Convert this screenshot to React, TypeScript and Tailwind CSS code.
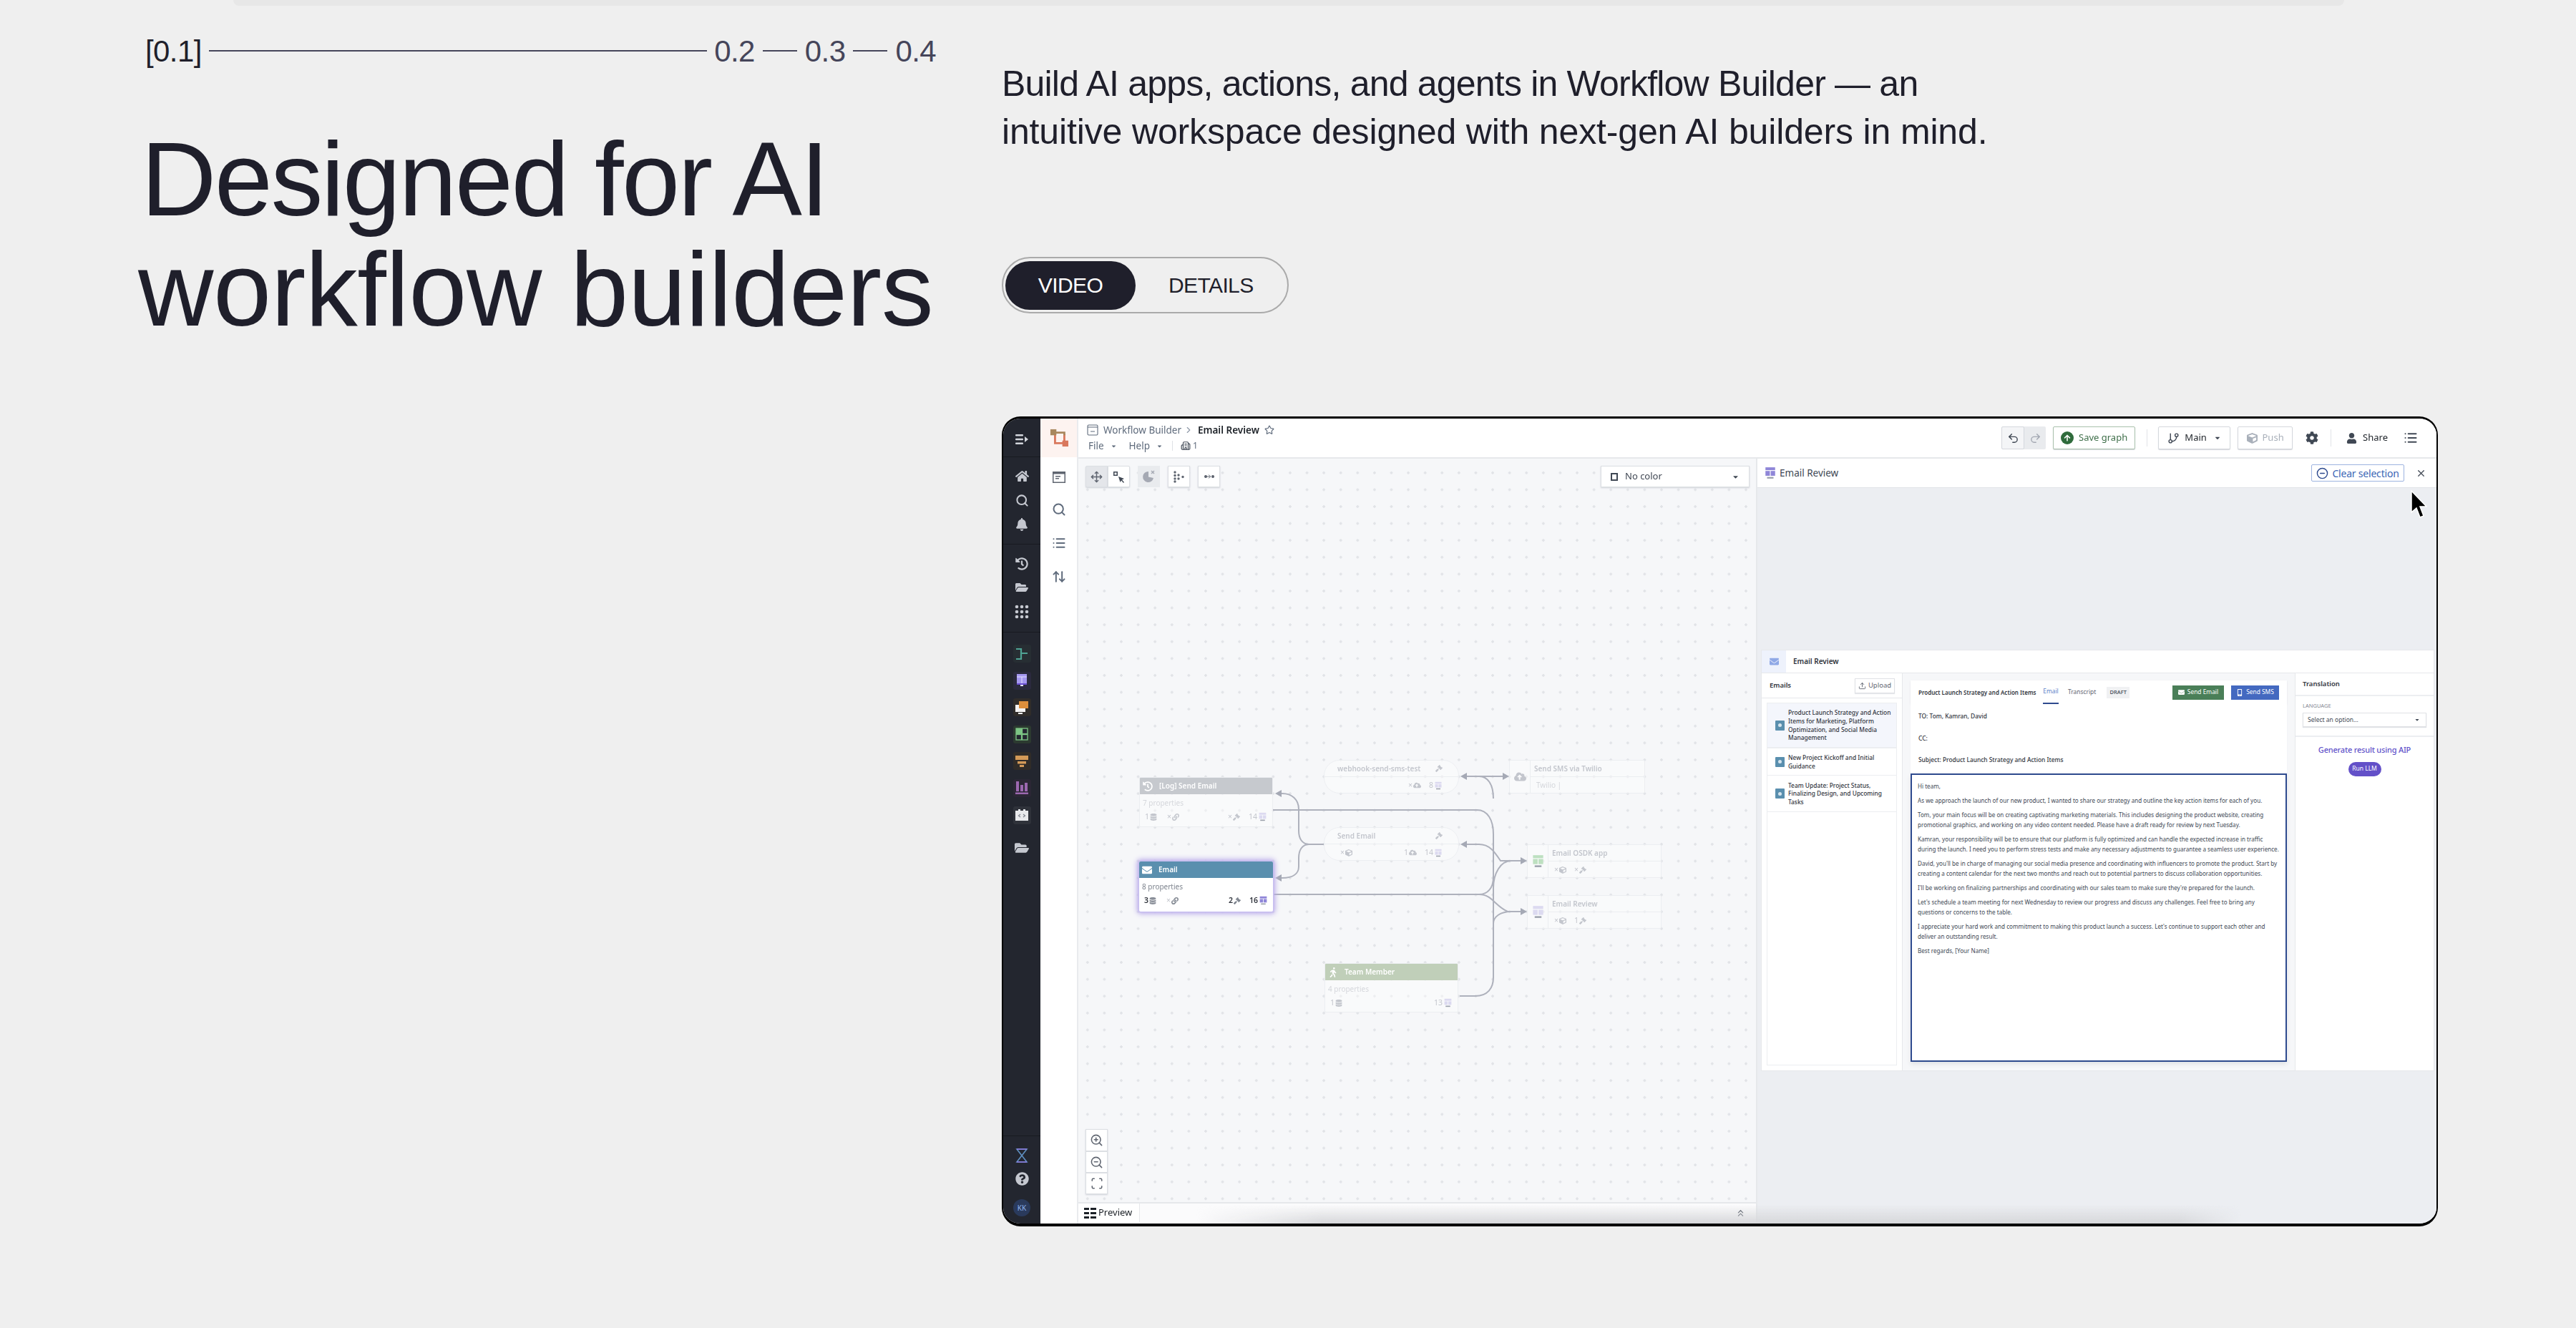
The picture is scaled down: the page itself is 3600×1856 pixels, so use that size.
import {
  Search, List, ArrowUpDown, ChevronRight, ChevronsUp, Star, Undo2, Redo2, GitBranch, X, Move, ZoomIn, ZoomOut, Scan, Upload, CircleMinus, Building2,
} from "lucide-react";
import {
  FaHome, FaBell, FaFolderOpen, FaHistory, FaCog, FaUser, FaEnvelope, FaCube, FaDatabase, FaLink, FaGavel, FaWalking, FaCloudUploadAlt, FaArrowUp, FaMobileAlt, FaQuestionCircle, FaCaretDown,
} from "react-icons/fa";

const plex = "font-['Noto_Sans',sans-serif]";

function Table({ size = 14, color = "#8f86d8" }: { size?: number; color?: string }) {
  return (
    <svg width={size} height={size} viewBox="0 0 16 16" fill={color}>
      <rect x="2" y="1" width="12" height="3.5" />
      <rect x="2" y="5.5" width="5.5" height="6" />
      <rect x="8.5" y="5.5" width="5.5" height="6" />
      <rect x="4" y="13" width="8" height="2" fill="#9aa0ab" />
    </svg>
  );
}

function Grid3() {
  return (
    <svg width="20" height="20" viewBox="0 0 20 20" fill="#c5c8d0">
      {[3, 10, 17].map((y) => [3, 10, 17].map((x) => <circle key={`${x}-${y}`} cx={x} cy={y} r="2.3" />))}
    </svg>
  );
}

function Logo() {
  return (
    <svg width="26" height="26" viewBox="0 0 28 28" fill="none">
      <path d="M8 8V22H22V8" stroke="#d9775c" strokeWidth="3" />
      <path d="M8 6H22V10" stroke="#a8875d" strokeWidth="3" />
      <rect x="1" y="1" width="9" height="9" fill="#a8875d" />
      <rect x="19" y="18" width="9" height="9" fill="#d9775c" />
    </svg>
  );
}

function ColorTile({ bg, children }: { bg: string; children: React.ReactNode }) {
  return (
    <div className="flex h-[25px] w-[25px] items-center justify-center rounded-[3px]" style={{ backgroundColor: bg }}>
      {children}
    </div>
  );
}

function Sidebar() {
  return (
    <div className="flex w-[52px] shrink-0 flex-col bg-[#23262f] text-[#c5c8d0]">
      <div className="flex h-[54px] shrink-0 items-center justify-center border-b border-[#181a20] pt-1">
        <svg width="18" height="16" viewBox="0 0 18 16" fill="#d3d6dc">
          <rect x="0" y="1" width="11" height="2.4" rx="1" />
          <rect x="0" y="6.8" width="11" height="2.4" rx="1" />
          <rect x="0" y="12.6" width="11" height="2.4" rx="1" />
          <path d="M13 4 18 8 13 12Z" />
        </svg>
      </div>
      <div className="flex h-[122px] shrink-0 flex-col items-center gap-[15px] border-b border-[#181a20] pt-[17px]">
        <FaHome size={19} />
        <Search size={19} strokeWidth={2.6} />
        <FaBell size={18} />
      </div>
      <div className="flex h-[123px] shrink-0 flex-col items-center gap-[15px] border-b border-[#181a20] pt-[18px]">
        <FaHistory size={18} />
        <FaFolderOpen size={18} />
        <Grid3 />
      </div>
      <div className="flex flex-col items-center gap-[12.6px] pt-[17px]">
        <ColorTile bg="#272e33">
          <svg width="20" height="20" viewBox="0 0 20 20" fill="none" stroke="#4fa394" strokeWidth="2.2">
            <path d="M2 3H9V9H18M9 9V17H2" />
          </svg>
        </ColorTile>
        <ColorTile bg="#2b2a3e">
          <svg width="20" height="20" viewBox="0 0 20 20">
            <rect x="3" y="1" width="14" height="13" fill="#a598f0" />
            <path d="M3 5H17M10 5V14" stroke="#e4e0ff" strokeWidth="1" />
            <rect x="3" y="14" width="14" height="2" fill="#6a4fd0" />
            <rect x="8" y="16" width="4" height="2" fill="#e4e0ff" />
          </svg>
        </ColorTile>
        <ColorTile bg="#302d2a">
          <svg width="20" height="20" viewBox="0 0 20 20">
            <rect x="1" y="6" width="14" height="10" fill="#f4f4f4" />
            <rect x="6" y="1" width="13" height="10" fill="#dc8f3c" />
            <rect x="5" y="17" width="6" height="2" fill="#f4f4f4" />
          </svg>
        </ColorTile>
        <ColorTile bg="#2c3a30">
          <svg width="20" height="20" viewBox="0 0 20 20" fill="#23262f" stroke="#7cc484" strokeWidth="1.3">
            <rect x="2" y="2" width="7.5" height="7.5" fill="#7cc484" />
            <rect x="10.5" y="2" width="7.5" height="7.5" />
            <rect x="2" y="10.5" width="7.5" height="7.5" />
            <rect x="10.5" y="10.5" width="7.5" height="7.5" />
          </svg>
        </ColorTile>
        <ColorTile bg="#302c28">
          <svg width="20" height="20" viewBox="0 0 20 20" fill="#d39a58">
            <rect x="1" y="2" width="18" height="6" />
            <rect x="4" y="10" width="12" height="3.5" />
            <rect x="7" y="15" width="6" height="3" />
          </svg>
        </ColorTile>
        <ColorTile bg="#2b2735">
          <svg width="20" height="20" viewBox="0 0 20 20" fill="#9c68b0">
            <rect x="2" y="1" width="4" height="14" />
            <rect x="8" y="6" width="4" height="9" />
            <rect x="14" y="3" width="4" height="12" />
            <rect x="1" y="16.5" width="18" height="2.5" />
          </svg>
        </ColorTile>
        <ColorTile bg="#2f323a">
          <svg width="20" height="20" viewBox="0 0 20 20">
            <path d="M1 4H5V2H8V4H12V2H15V4H19V18H1Z" fill="#e8e9ec" />
            <path d="M8 9 5.5 11 8 13M12 9 14.5 11 12 13" stroke="#7d818b" strokeWidth="1.2" fill="none" />
          </svg>
        </ColorTile>
      </div>
      <div className="flex justify-center pt-[23px]">
        <FaFolderOpen size={20} />
      </div>
      <div className="mt-auto flex h-[123px] shrink-0 flex-col items-center gap-[13px] border-t border-[#181a20] pt-[17px]">
        <svg width="18" height="20" viewBox="0 0 18 20" fill="none" strokeWidth="1.6">
          <path d="M2 1H16L2 19H16Z" stroke="#5f8fc0" />
          <path d="M2 1H16M2 19H16" stroke="#8f7be0" />
        </svg>
        <FaQuestionCircle size={19} />
        <div className={`mt-[6px] flex h-[24px] w-[24px] items-center justify-center rounded-full bg-[#2a3a5c] text-[10px] text-[#8fb4ee] ${plex}`}>KK</div>
      </div>
    </div>
  );
}

function ToolRail() {
  return (
    <div className="flex w-[53px] shrink-0 flex-col border-r-2 border-[#e9ebee] bg-white text-[#5f6b7c]">
      <div className="flex h-[54px] items-center justify-center bg-[#fdf3f0]">
        <Logo />
      </div>
      <div className="flex flex-col items-center gap-[27px] pt-[20px]">
        <svg width="18" height="16" viewBox="0 0 18 16">
          <rect width="18" height="16" fill="#5f6570" />
          <rect x="1.5" y="3.5" width="15" height="11" fill="#fff" />
          <rect x="4" y="6" width="7" height="1.5" fill="#5f6570" />
          <rect x="4" y="9" width="5" height="1.5" fill="#5f6570" />
        </svg>
        <Search size={20} strokeWidth={2.4} />
        <List size={20} strokeWidth={2.4} />
        <ArrowUpDown size={20} strokeWidth={2.4} />
      </div>
    </div>
  );
}

function HeaderButton({ className = "", children }: { className?: string; children: React.ReactNode }) {
  return (
    <div className={`flex h-[32px] items-center justify-center gap-[7px] rounded-[2px] border bg-white shadow-[0_1px_1px_#d5d8dd] ${className}`}>
      {children}
    </div>
  );
}

function TopBar() {
  return (
    <div className={`flex h-[56px] shrink-0 items-center border-b-2 border-[#e6e8eb] bg-white pl-[12px] pr-[26px] ${plex}`}>
      <div className="flex flex-col gap-[4px]">
        <div className="flex h-[18px] items-center text-[13.5px] text-[#5f6b7c]">
          <svg width="16" height="16" viewBox="0 0 16 16" fill="none" stroke="#5f6b7c" strokeWidth="1.1" className="mr-[7px]">
            <rect x="1" y="1" width="14" height="14" rx="1.5" />
            <path d="M1 4H15M5 10H11" />
          </svg>
          <span>Workflow Builder</span>
          <ChevronRight size={14} className="mx-[3px] text-[#8f99a8]" />
          <span className="ml-[3px] font-semibold text-[#1c2127]">Email Review</span>
          <Star size={14} className="ml-[7px]" />
        </div>
        <div className="flex h-[18px] items-center text-[13.5px] text-[#5f6b7c]">
          <span className="ml-[2px]">File</span>
          <FaCaretDown size={9} className="ml-[9px]" />
          <span className="ml-[17px]">Help</span>
          <FaCaretDown size={9} className="ml-[9px]" />
          <span className="ml-[13px] h-[14px] w-px bg-[#dfe1e5]" />
          <Building2 size={14} className="ml-[11px] text-[#404854]" />
          <span className="ml-[3px] text-[12px]">1</span>
        </div>
      </div>
      <div className="ml-auto flex items-center text-[13px] text-[#404854]">
        <div className="flex h-[32px] w-[62px] rounded-[2px] bg-[#e9ebee]">
          <div className="flex w-[32px] items-center justify-center rounded-[2px] border border-[#d5d8dd] bg-[#f4f5f7]">
            <Undo2 size={17} />
          </div>
          <div className="flex flex-1 items-center justify-center text-[#a4a9b3]">
            <Redo2 size={17} />
          </div>
        </div>
        <HeaderButton className="ml-[10px] w-[115px] border-[#a9c0ac]">
          <span className="flex h-[18px] w-[18px] items-center justify-center rounded-full bg-[#2f6b3c]">
            <FaArrowUp size={10} color="#fff" />
          </span>
          <span className="text-[#3f6f4a]">Save graph</span>
        </HeaderButton>
        <span className="ml-[16px] h-[24px] w-px bg-[#e1e3e7]" />
        <HeaderButton className="ml-[15px] w-[101px] border-[#d5d8dd]">
          <GitBranch size={17} />
          <span className="text-[#1c2127]">Main</span>
          <FaCaretDown size={10} className="ml-[3px]" />
        </HeaderButton>
        <HeaderButton className="ml-[10px] w-[77px] border-[#d5d8dd] text-[#a9b0ba]">
          <FaCube size={15} />
          <span>Push</span>
        </HeaderButton>
        <FaCog size={18} className="ml-[18px] text-[#404854]" />
        <span className="ml-[17px] h-[24px] w-px bg-[#e1e3e7]" />
        <FaUser size={15} className="ml-[21px]" />
        <span className="ml-[8px] text-[#1c2127]">Share</span>
        <List size={20} className="ml-[22px]" strokeWidth={2.4} />
      </div>
    </div>
  );
}

function IconBtn({ className = "bg-white", children }: { className?: string; children: React.ReactNode }) {
  return (
    <div className={`flex h-[30px] w-[31px] items-center justify-center border border-[#dcdfe3] text-[#5f6570] shadow-[0_1px_2px_#cfd2d8] ${className}`}>
      {children}
    </div>
  );
}

function Arrow({ x, y, left = false }: { x: number; y: number; left?: boolean }) {
  const d = left ? `M${x} ${y}L${x + 9} ${y - 5}V${y + 5}Z` : `M${x} ${y}L${x - 9} ${y - 5}V${y + 5}Z`;
  return <path d={d} fill="#a5a9b5" stroke="none" />;
}

function Edges() {
  return (
    <svg className="absolute inset-0" width="948" height="1040" fill="none" stroke="#aeb1bc" strokeWidth="2">
      <path d="M343 539H323C312 539 308 530 308 520V490C308 476 298 468 285 468H277" />
      <path d="M323 539C312 539 308 548 308 558V570C308 580 300 586 285 586H277" />
      <path d="M272 491H557C572 491 580 505 580 525V725C580 740 572 751 555 751H533" />
      <path d="M538 444H598" />
      <path d="M560 444C572 444 580 455 580 475" />
      <path d="M272 609H560C572 609 580 600 580 585" />
      <path d="M540 539H560C575 539 582 550 590 562H623" />
      <path d="M580 600C580 580 590 562 605 562" />
      <path d="M560 609C578 609 582 625 600 633H623" />
      <path d="M580 650C580 640 590 633 605 633" />
      <Arrow x={275} y={468} left />
      <Arrow x={275} y={586} left />
      <Arrow x={534} y={444} left />
      <Arrow x={534} y={539} left />
      <Arrow x={602} y={444} />
      <Arrow x={627} y={562} />
      <Arrow x={627} y={633} />
    </svg>
  );
}

function Count({ n, children, dark = false }: { n?: string; children: React.ReactNode; dark?: boolean }) {
  return (
    <span className={`flex items-center gap-[1px] text-[10.5px] ${dark ? "font-semibold text-[#30343c]" : "text-[#c3c6cd]"}`}>
      {n}
      {children}
    </span>
  );
}

function ObjectNode({ pos, head, icon, title, props, faint = true, left, right }: {
  pos: string; head: string; icon: React.ReactNode; title: string; props: string; faint?: boolean; left: React.ReactNode; right: React.ReactNode;
}) {
  return (
    <div className={`absolute flex w-[187px] flex-col overflow-hidden rounded-[2px] ${pos} ${faint ? "border border-[#eceef1] bg-white/40" : "bg-white shadow-[0_0_0_1.5px_#c8bff0,0_0_7px_3px_#b8a9ea]"}`}>
      <div className="flex h-[23px] shrink-0 items-center gap-[9px] px-[4px] text-[10px] font-semibold text-white" style={{ backgroundColor: head }}>
        {icon}
        {title}
      </div>
      <div className={`px-[4px] pt-[5px] text-[10px] leading-[14px] ${faint ? "text-[#d5d7dc]" : "text-[#7f858f]"}`}>{props}</div>
      <div className="flex items-center justify-between px-[7px] pt-[5px]">
        {left}
        {right}
      </div>
    </div>
  );
}

function PillNode({ pos, title, left, right }: { pos: string; title: string; left: React.ReactNode; right: React.ReactNode }) {
  return (
    <div className={`absolute h-[47px] w-[189px] rounded-[22px] border border-[#eceef1] bg-white/40 ${pos}`}>
      <div className="flex h-[23px] items-center justify-between border-b border-[#eceef1] pl-[18px] pr-[22px] text-[10px] font-semibold text-[#c3c6cd]">
        {title}
        <FaGavel size={10} />
      </div>
      <div className="flex h-[23px] items-center justify-between pl-[22px] pr-[22px]">
        {left}
        {right}
      </div>
    </div>
  );
}

function AppNode({ pos, w, title, icon, sub }: { pos: string; w: string; title: string; icon: React.ReactNode; sub: React.ReactNode }) {
  return (
    <div className={`absolute flex h-[47px] rounded-[2px] border border-[#eceef1] bg-white/40 ${pos} ${w}`}>
      <div className="flex w-[29px] shrink-0 items-center justify-center border-r border-[#eceef1]">{icon}</div>
      <div className="flex-1">
        <div className="flex h-[23px] items-center border-b border-[#eceef1] pl-[5px] text-[10px] font-semibold text-[#c3c6cd]">{title}</div>
        <div className="flex h-[23px] items-center gap-[8px] pl-[8px] text-[10px] text-[#d5d7dc]">{sub}</div>
      </div>
    </div>
  );
}

function Canvas() {
  return (
    <div className={`relative flex-1 overflow-hidden bg-[#f6f7f9] bg-[radial-gradient(circle,#e1e3e7_1.5px,transparent_2px)] bg-[size:23.6px_23.6px] bg-[position:1px_8px] ${plex}`}>
      <Edges />

      {/* toolbar */}
      <div className="absolute left-[10px] top-[10px] flex items-start gap-[11px]">
        <div className="flex">
          <IconBtn className="rounded-l-[2px] bg-[#e4e6ea]"><Move size={17} /></IconBtn>
          <IconBtn className="rounded-r-[2px] bg-white">
            <svg width="17" height="17" viewBox="0 0 17 17" fill="#404854"><path d="M1 1H7V7H1ZM2.5 2.5V5.5H5.5V2.5ZM8 8 16 11 13 12.5 16 16 15 17 12 13.5 10.5 16Z" /></svg>
          </IconBtn>
        </div>
        <div className="flex h-[30px] w-[31px] items-center justify-center bg-[#e9ebee]">
          <svg width="20" height="18" viewBox="0 0 20 18" fill="#a5a9b3"><path d="M9 2A7.5 7.5 0 1 0 16 11L9 9.5Z" /><path d="M13 1l4 4m0-4-4 4" stroke="#a5a9b3" strokeWidth="1.4" /></svg>
        </div>
        <IconBtn>
          <svg width="17" height="17" viewBox="0 0 17 17" fill="#5f6570"><circle cx="3" cy="2" r="1.7" /><circle cx="3" cy="6.5" r="1.7" /><circle cx="3" cy="11" r="1.7" /><circle cx="3" cy="15" r="1.7" /><circle cx="8" cy="6" r="1.7" /><circle cx="8" cy="11" r="1.7" /><circle cx="14" cy="8.5" r="1.7" /></svg>
        </IconBtn>
        <IconBtn>
          <svg width="16" height="10" viewBox="0 0 18 12" fill="#5f6570" stroke="#5f6570"><circle cx="3" cy="6" r="2" /><circle cx="15" cy="6" r="2" /><path d="M5 6H11M8 3l3 3-3 3" fill="none" strokeWidth="1.2" /></svg>
        </IconBtn>
      </div>

      <div className="absolute right-[9px] top-[10px] flex h-[30px] w-[208px] items-center border border-[#dcdfe3] bg-white pl-[13px] pr-[13px] text-[13px] text-[#404854] shadow-[0_1px_2px_#cfd2d8]">
        <span className="mr-[10px] h-[11px] w-[10px] border-2 border-[#404854]" />
        No color
        <FaCaretDown size={11} className="ml-auto" />
      </div>

      {/* nodes */}
      <ObjectNode
        pos="left-[85px] top-[445px] h-[70px]"
        head="#c6c9ce"
        icon={<FaHistory size={14} />}
        title="[Log] Send Email"
        props="7 properties"
        left={<span className="flex gap-[14px]"><Count n="1"><FaDatabase size={10} /></Count><Count n="× "><FaLink size={10} /></Count></span>}
        right={<span className="flex gap-[12px]"><Count n="× "><FaGavel size={10} /></Count><Count n="14"><Table size={13} color="#dcdaf0" /></Count></span>}
      />
      <ObjectNode
        pos="left-[85px] top-[563px] h-[70px]"
        head="#5a8fae"
        faint={false}
        icon={<FaEnvelope size={14} />}
        title="Email"
        props="8 properties"
        left={<span className="flex gap-[14px]"><Count n="3" dark><FaDatabase size={10} color="#8a8f99" /></Count><Count n="× "><FaLink size={10} color="#7f858f" /></Count></span>}
        right={<span className="flex gap-[12px]"><Count n="2" dark><FaGavel size={10} color="#7f858f" /></Count><Count n="16" dark><Table size={13} /></Count></span>}
      />
      <PillNode
        pos="left-[343px] top-[421px]"
        title="webhook-send-sms-test"
        left={<span />}
        right={<Count n="× "><FaCloudUploadAlt size={11} /><span className="ml-[10px]">8</span><Table size={12} color="#dcdaf0" /></Count>}
      />
      <PillNode
        pos="left-[343px] top-[515px]"
        title="Send Email"
        left={<Count n="× "><FaCube size={10} /></Count>}
        right={<Count n="1"><FaCloudUploadAlt size={11} /><span className="ml-[10px]">14</span><Table size={12} color="#dcdaf0" /></Count>}
      />
      <AppNode pos="left-[602px] top-[421px]" w="w-[190px]" title="Send SMS via Twilio" icon={<FaCloudUploadAlt size={17} color="#c3c6cd" />} sub="Twilio |" />
      <AppNode pos="left-[627px] top-[539px]" w="w-[188px]" title="Email OSDK app" icon={<Table size={19} color="#bde0c0" />} sub={<Count n="× "><FaCube size={10} /><span className="ml-[10px]">× </span><FaGavel size={10} /></Count>} />
      <AppNode pos="left-[627px] top-[610px]" w="w-[188px]" title="Email Review" icon={<Table size={19} color="#dcdaf0" />} sub={<Count n="× "><FaCube size={10} /><span className="ml-[10px]">1</span><FaGavel size={10} /></Count>} />
      <ObjectNode
        pos="left-[344px] top-[705px] h-[69px]"
        head="#c0cfb9"
        icon={<FaWalking size={14} />}
        title="Team Member"
        props="4 properties"
        left={<Count n="1"><FaDatabase size={10} /></Count>}
        right={<Count n="13"><Table size={13} color="#dcdaf0" /></Count>}
      />

      {/* zoom */}
      <div className="absolute bottom-[11px] left-[10px] flex flex-col">
        <IconBtn className="h-[31px] bg-white"><ZoomIn size={19} /></IconBtn>
        <IconBtn className="h-[30px] bg-white"><ZoomOut size={19} /></IconBtn>
        <IconBtn className="h-[30px] bg-white"><Scan size={18} /></IconBtn>
      </div>
    </div>
  );
}

function PreviewBar() {
  return (
    <div className={`flex h-[30px] shrink-0 items-center border-t-2 border-[#e6e8eb] bg-[#fbfbfc] pb-[2px] pr-[14px] ${plex}`}>
      <div className="flex h-full w-[86px] items-center gap-[3px] border-r border-[#e6e8eb] bg-white pl-[8px] text-[13px] text-[#1c2127]">
        <svg width="17" height="15" viewBox="0 0 17 15" fill="#1c2127">
          <path d="M0 0H7V3H0ZM9 0H17V3H9ZM0 6H7V9H0ZM9 6H17V9H9ZM0 12H7V15H0ZM9 12H17V15H9Z" />
        </svg>
        Preview
      </div>
      <ChevronsUp size={15} className="ml-auto text-[#404854]" />
    </div>
  );
}

const mailItems = [
  { h: "h-[63px] bg-[#f4f6fc] border-b-2 border-[#b9c7ea]", lines: ["Product Launch Strategy and Action", "Items for Marketing, Platform", "Optimization, and Social Media", "Management"] },
  { h: "h-[38px]", lines: ["New Project Kickoff and Initial", "Guidance"] },
  { h: "h-[51px]", lines: ["Team Update: Project Status,", "Finalizing Design, and Upcoming", "Tasks"] },
];

const bodyText = [
  ["Hi team,"],
  ["As we approach the launch of our new product, I wanted to share our strategy and outline the key action items for each of you."],
  ["Tom, your main focus will be on creating captivating marketing materials. This includes designing the product website, creating", "promotional graphics, and working on any video content needed. Please have a draft ready for review by next Tuesday."],
  ["Kamran, your responsibility will be to ensure that our platform is fully optimized and can handle the expected increase in traffic", "during the launch. I need you to perform stress tests and make any necessary adjustments to guarantee a seamless user experience."],
  ["David, you'll be in charge of managing our social media presence and coordinating with influencers to promote the product. Start by", "creating a content calendar for the next two months and reach out to potential partners to discuss collaboration opportunities."],
  ["I'll be working on finalizing partnerships and coordinating with our sales team to make sure they're prepared for the launch."],
  ["Let's schedule a team meeting for next Wednesday to review our progress and discuss any challenges. Feel free to bring any", "questions or concerns to the table."],
  ["I appreciate your hard work and commitment to making this product launch a success. Let's continue to support each other and", "deliver an outstanding result."],
  ["Best regards, [Your Name]"],
];

function EmailWidget() {
  return (
    <div className={`mx-[5px] mt-[226px] flex h-[589px] w-[941px] flex-col border border-[#e6e8eb] bg-white ${plex}`}>
      <div className="flex h-[32px] shrink-0 items-center border-b border-[#e6e8eb]">
        <div className="flex h-full w-[34px] items-center justify-center bg-[#eef2fc] text-[#8fa8e6]"><FaEnvelope size={13} /></div>
        <span className="ml-[10px] text-[10px] font-semibold text-[#30343c]">Email Review</span>
      </div>
      <div className="flex flex-1">
        <div className="flex w-[196px] shrink-0 flex-col">
          <div className="flex h-[35px] items-center justify-between border-b border-[#e6e8eb] pl-[11px] pr-[10px] text-[9.5px]">
            <span className="font-semibold text-[#30343c]">Emails</span>
            <span className="flex h-[21px] w-[56px] items-center justify-center gap-[3px] border border-[#dfe1e5] text-[#5f6570] shadow-[0_1px_1px_#e6e8eb]">
              <Upload size={11} />
              Upload
            </span>
          </div>
          <div className="mx-[7px] mb-[7px] mt-[6px] flex flex-1 flex-col border border-[#eceef1]">
            {mailItems.map((m) => (
              <div key={m.lines[0]} className={`flex items-center gap-[5px] border-b border-[#eceef1] pl-[11px] ${m.h}`}>
                <span className="flex h-[14px] w-[13px] shrink-0 items-center justify-center rounded-[1px] bg-[#5a8fae]">
                  <span className="h-[5px] w-[5px] rounded-full bg-[#d4e4ee]" />
                </span>
                <div className="whitespace-nowrap text-[8.4px] font-medium leading-[11.6px] text-[#30343c]">
                  {m.lines.map((l) => <div key={l}>{l}</div>)}
                </div>
              </div>
            ))}
          </div>
        </div>
        <div className="w-[550px] shrink-0 border-x border-[#e6e8eb] bg-[#f6f7f9] px-[11px] pt-[10px]">
          <div className="flex h-[33px] items-center bg-white pl-[11px] pr-[11px] text-[8.4px] shadow-[0_1px_2px_#dfe1e5]">
            <span className="w-[174px] whitespace-nowrap text-[8px] font-semibold text-[#30343c]">Product Launch Strategy and Action Items</span>
            <span className="flex h-[33px] w-[22px] items-center justify-center border-b-2 border-[#2e4a8e] text-[#5b7fc7]">Email</span>
            <span className="ml-[13px] text-[#5f6570]">Transcript</span>
            <span className="ml-[15px] flex h-[16px] w-[32px] items-center justify-center bg-[#f0f1f3] text-[7.5px] font-medium text-[#404854]">DRAFT</span>
            <span className="ml-auto flex h-[20px] w-[72px] items-center justify-center gap-[4px] bg-[#4a7f58] text-white"><FaEnvelope size={9} />Send Email</span>
            <span className="ml-[10px] flex h-[20px] w-[67px] items-center justify-center gap-[4px] bg-[#4469c0] text-white"><FaMobileAlt size={10} />Send SMS</span>
          </div>
          <div className="flex h-[97px] flex-col justify-between bg-white px-[11px] pb-[12px] pt-[11px] text-[8.4px] font-medium text-[#30343c] shadow-[0_1px_1px_#e6e8eb]">
            <span>TO: Tom, Kamran, David</span>
            <span>CC:</span>
            <span>Subject: Product Launch Strategy and Action Items</span>
          </div>
          <div className="h-[403px] border-2 border-[#2e4a8e] bg-white px-[8px] pt-[9px] text-[8.1px] leading-[14px] text-[#404854] shadow-[0_3px_6px_#dfe1e5]">
            {bodyText.map((p) => (
              <div key={p[0]} className="mb-[6px] whitespace-nowrap">
                {p.map((l) => <div key={l}>{l}</div>)}
              </div>
            ))}
          </div>
        </div>
        <div className="flex-1">
          <div className="flex h-[32px] items-center border-b-2 border-[#eceef1] pl-[10px] text-[9.5px] font-semibold text-[#30343c]">Translation</div>
          <div className="h-[57px] border-b-2 border-[#eceef1] px-[10px] pt-[8px]">
            <div className="text-[7.5px] text-[#7f858f]">LANGUAGE</div>
            <div className="mt-[4px] flex h-[20px] items-center justify-between border border-[#dfe1e5] pl-[6px] pr-[8px] text-[8.5px] text-[#404854] shadow-[0_1px_1px_#dfe1e5]">
              Select an option...
              <FaCaretDown size={8} />
            </div>
          </div>
          <div className="mt-[10px] text-center text-[11px] font-medium tracking-[-0.2px] text-[#5f52c9]">Generate result using AIP</div>
          <div className="mx-auto mt-[8px] flex h-[20px] w-[46px] items-center justify-center rounded-full bg-[#6350c8] text-[8.5px] text-white">Run LLM</div>
        </div>
      </div>
    </div>
  );
}

function RightPanel() {
  return (
    <div className="flex flex-1 flex-col bg-[#eceef2]">
      <div className={`flex h-[41px] shrink-0 items-center border-b border-[#e1e3e7] bg-white pl-[9px] pr-[16px] ${plex}`}>
        <Table size={18} />
        <span className="ml-[4px] text-[13.5px] text-[#404854]">Email Review</span>
        <div className="ml-auto flex h-[24px] w-[130px] items-center justify-center gap-[5px] rounded-[2px] border border-[#9db3e0] bg-white text-[14px] tracking-[-0.2px] text-[#3b66b5]">
          <CircleMinus size={17} className="text-[#2e4a8e]" />
          Clear selection
        </div>
        <X size={15} className="ml-[16px] text-[#404854]" />
      </div>
      <EmailWidget />
    </div>
  );
}

function Screenshot() {
  return (
    <div className="relative mt-[144px] h-[1132px] w-[2007px] overflow-hidden rounded-[26px] border-x-2 border-b-[4px] border-t-[3px] border-black">
      <div className="flex h-full blur-[0.4px]">
        <Sidebar />
        <ToolRail />
        <div className="flex min-w-0 flex-1 flex-col">
          <TopBar />
          <div className="flex min-h-0 flex-1">
            <div className="flex w-[949px] shrink-0 flex-col border-r-2 border-[#e6e8eb]">
              <Canvas />
              <PreviewBar />
            </div>
            <RightPanel />
          </div>
        </div>
      </div>
      {/* soft shade along the bottom edge */}
      <div className="absolute bottom-0 left-[270px] h-[26px] w-[1460px] bg-gradient-to-t from-[#d6d7da] to-transparent [mask-image:linear-gradient(to_right,transparent,black_12%,black_94%,transparent)]" />
      <svg className="absolute left-[1966px] top-[100px]" width="24" height="40" viewBox="0 0 24 40">
        <path d="M2 1V31L9 25 14 38 19 36 14 23 23 23Z" fill="#000" stroke="#fff" strokeWidth="1.5" />
      </svg>
    </div>
  );
}

export default function App() {
  return (
    <div className="h-[1856px] overflow-hidden bg-[#efefef] font-['Liberation_Sans',sans-serif] text-[#1f1f2b]">
      <div className="ml-[326px] h-[8px] w-[2950px] rounded-b-[10px] bg-[#e7e7e7]" />
      <div className="flex">
        <div className="ml-[200px] w-[1200px] shrink-0 pt-[38px]">
          <div className="flex h-[50px] w-[1108px] items-center pl-[3px] text-[42px] tracking-[-0.6px] text-[#45455a]">
            <span className="text-[#1f1f2b]">[0.1]</span>
            <span className="ml-[10px] h-[2px] flex-1 bg-[#45455a]" />
            <span className="ml-[10px]">0.2</span>
            <span className="ml-[11px] h-[2px] w-[48px] bg-[#45455a]" />
            <span className="ml-[11px]">0.3</span>
            <span className="ml-[11px] h-[2px] w-[48px] bg-[#45455a]" />
            <span className="ml-[11px]">0.4</span>
          </div>
          <h1 className="mt-[78px] text-[146px] font-normal leading-[154px]">
            <span className="-ml-[3px] block tracking-[-2.6px]">Designed for AI</span>
            <span className="-ml-[7px] block tracking-[-0.5px]">workflow builders</span>
          </h1>
        </div>
        <div className="w-[2007px] shrink-0 pt-[76px]">
          <p className="text-[50px] leading-[67px]">
            <span className="block tracking-[-0.8px]">Build AI apps, actions, and agents in Workflow Builder — an</span>
            <span className="block tracking-[-0.15px]">intuitive workspace designed with next-gen AI builders in mind.</span>
          </p>
          <div className="mt-[141px] flex h-[79px] w-[401px] items-center rounded-full border-2 border-[#aaaaaa] pl-[3px] text-[30px] tracking-[-0.6px]">
            <span className="flex h-[68px] w-[182px] items-center justify-center rounded-full bg-[#1f1f2b] text-white">VIDEO</span>
            <span className="ml-[46px]">DETAILS</span>
          </div>
          <Screenshot />
        </div>
      </div>
    </div>
  );
}
